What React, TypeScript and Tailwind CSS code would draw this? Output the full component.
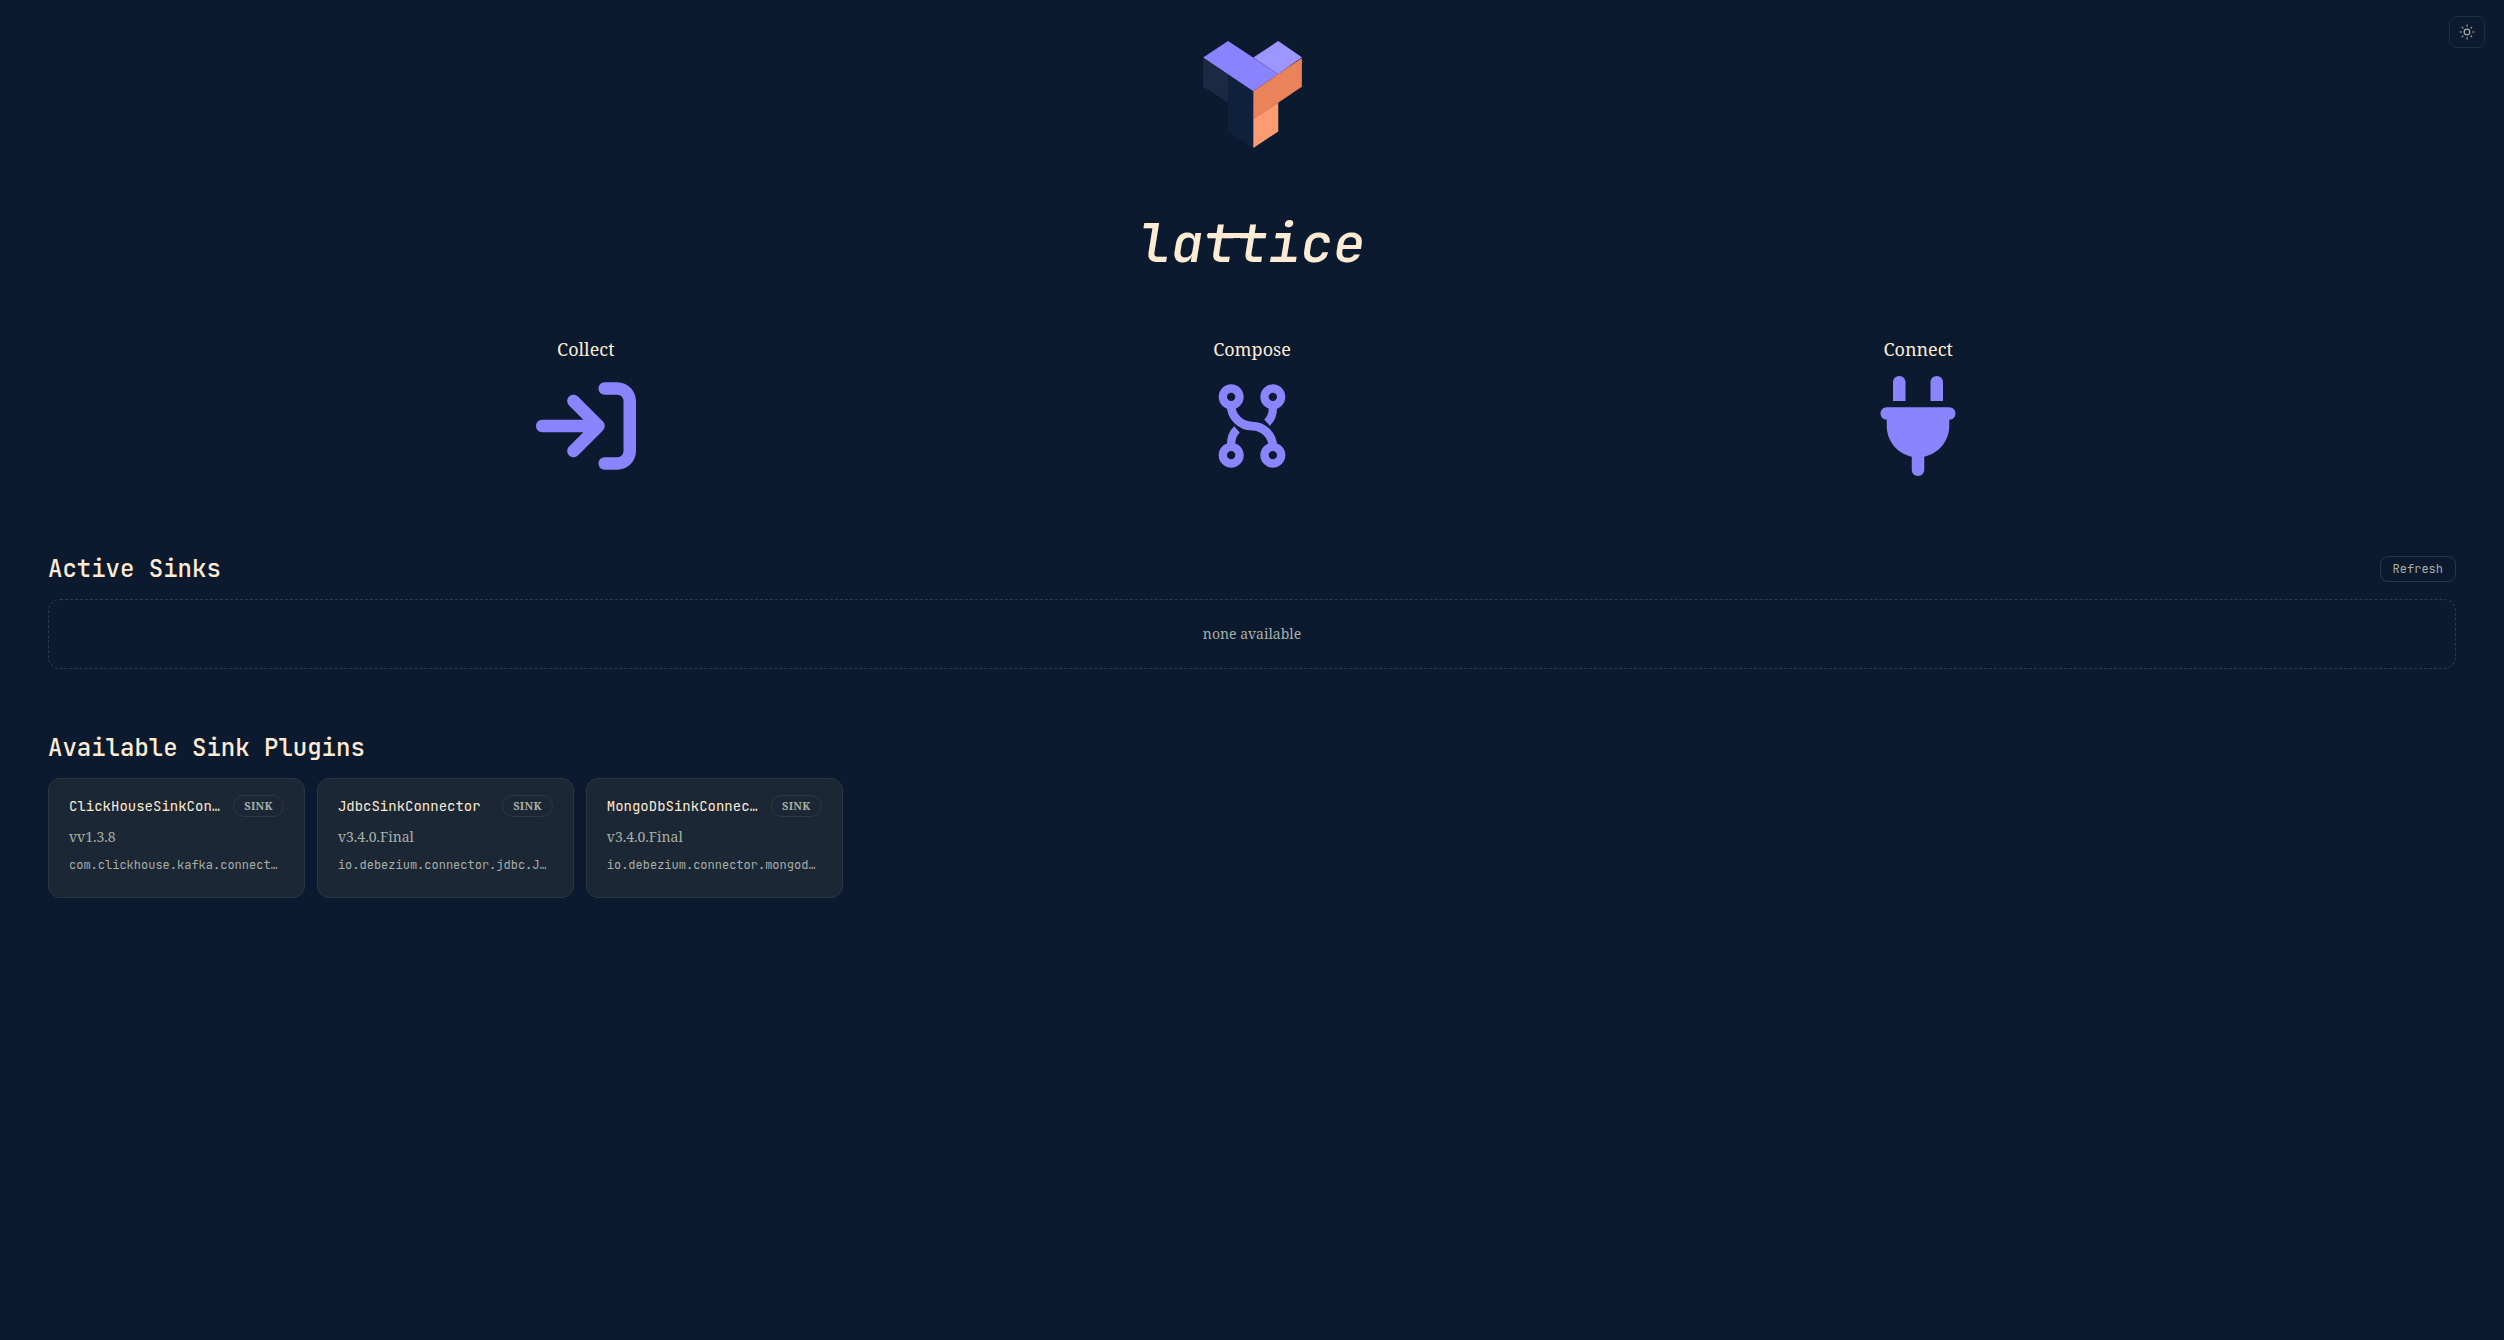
import type { ReactNode } from "react";
import { FaArrowRightToBracket, FaPlug } from "react-icons/fa6";

type Plugin = {
    name: string;
    version: string;
    className: string;
};

const plugins: Plugin[] = [
    {
        name: "ClickHouseSinkConnector",
        version: "v1.3.8",
        className: "com.clickhouse.kafka.connect.ClickHouseSinkConnector",
    },
    {
        name: "JdbcSinkConnector",
        version: "3.4.0.Final",
        className: "io.debezium.connector.jdbc.JdbcSinkConnector",
    },
    {
        name: "MongoDbSinkConnector",
        version: "3.4.0.Final",
        className: "io.debezium.connector.mongodb.MongoDbSinkConnector",
    },
];

function Logo() {
    return (
        <svg viewBox="249 62 297 322" className="w-[99px] h-[107px]" aria-hidden="true">
            <path d="M249 113L324 163V247L249 200Z" fill="#1b2a43" />
            <path d="M324 163L400 213V384L324 334Z" fill="#0f213b" />
            <path d="M400 112L475 62L546 111L475 162Z" fill="#9d96ff" />
            <path d="M249 112L324 62L475 162L400 213Z" fill="#8983ff" />
            <path d="M400 297L475 247V334L400 384Z" fill="#ff9b71" />
            <path d="M400 213L546 113V200L400 298Z" fill="#ea8359" />
        </svg>
    );
}

function ComposeIcon() {
    return (
        <svg
            viewBox="0 0 24 24"
            fill="none"
            stroke="currentColor"
            strokeWidth="2"
            className="size-[100px]"
            aria-hidden="true"
        >
            <circle cx="7" cy="5" r="2" />
            <circle cx="17" cy="5" r="2" />
            <circle cx="7" cy="19" r="2" />
            <circle cx="17" cy="19" r="2" />
            <path d="M7 7a5 5 0 0 0 5 5a5 5 0 0 1 5 5" strokeWidth="2.1" />
            <path d="M17 7.2C17.1 8.8 16.7 10.2 15.6 11.2" />
            <path d="M7 16.8C6.9 15.2 7.3 13.8 8.4 12.8" />
        </svg>
    );
}

function SunIcon() {
    return (
        <svg
            viewBox="0 0 16 16"
            fill="none"
            stroke="currentColor"
            className="size-4"
            aria-hidden="true"
        >
            <circle cx="8" cy="8" r="2.8" strokeWidth="1.2" />
            <path
                d="M8 .5V2.8M8 13.2V15.5M.5 8H2.8M13.2 8H15.5M2.9 2.9L4.3 4.3M11.7 11.7L13.1 13.1M2.9 13.1L4.3 11.7M11.7 4.3L13.1 2.9"
                strokeWidth="1.1"
            />
        </svg>
    );
}

function Step({ title, children }: { title: string; children: ReactNode }) {
    return (
        <div className="flex flex-col items-center gap-[13px]">
            <h3 className="text-lg leading-7 text-[#fdebd3]">{title}</h3>
            <div className="text-[#8a85ff]">{children}</div>
        </div>
    );
}

function PluginCard({ plugin }: { plugin: Plugin }) {
    return (
        <li className="min-w-0 rounded-xl border border-[#293742] bg-[#1b2735] px-5 pt-4 pb-[22px]">
            <div className="flex items-center justify-between gap-3">
                <h3 className="truncate font-[JetBrains_Mono,DejaVu_Sans_Mono,monospace] text-sm leading-5 text-[#fdebd3]">
                    {plugin.name}
                </h3>
                <span className="shrink-0 rounded-full border border-[#2a3945] px-2.5 text-[11px] leading-5 font-bold tracking-wide">
                    SINK
                </span>
            </div>
            <p className="mt-2 text-sm leading-6">v{plugin.version}</p>
            <p className="mt-1.5 truncate font-[JetBrains_Mono,DejaVu_Sans_Mono,monospace] text-xs leading-5">
                {plugin.className}
            </p>
        </li>
    );
}

export default function App() {
    return (
        <div className="min-h-screen bg-[#0b1a2f] font-[Noto_Serif,Droid_Serif,Liberation_Serif,serif] text-[#a8afa5]">
            <button
                type="button"
                aria-label="Toggle theme"
                className="absolute top-4 right-[19px] flex h-8 w-9 items-center justify-center rounded-lg border border-[#1f2d3d]"
            >
                <SunIcon />
            </button>
            <main className="px-12 pt-[41px] pb-12">
                <header className="flex flex-col items-center">
                    <Logo />
                    <h1 className="mt-[59px] font-[JetBrains_Mono,DejaVu_Sans_Mono,monospace] text-[54px] leading-[72px] font-medium italic text-[#fdebd3]">
                        la
                        <span className="relative before:absolute before:inset-x-1 before:top-[26px] before:h-[5px] before:rounded-full before:bg-[#fdebd3]">
                            tt
                        </span>
                        ice
                    </h1>
                </header>
                <section className="mx-auto mt-14 grid w-[83%] grid-cols-3">
                    <Step title="Collect">
                        <FaArrowRightToBracket className="size-[100px]" />
                    </Step>
                    <Step title="Compose">
                        <ComposeIcon />
                    </Step>
                    <Step title="Connect">
                        <FaPlug className="size-[100px]" />
                    </Step>
                </section>
                <section className="mt-[77px]">
                    <div className="flex items-center justify-between">
                        <h2 className="font-[JetBrains_Mono,DejaVu_Sans_Mono,monospace] text-2xl font-medium text-[#fdebd3]">
                            Active Sinks
                        </h2>
                        <button
                            type="button"
                            className="rounded-lg border border-[#2a3845] px-3 py-1 font-[JetBrains_Mono,DejaVu_Sans_Mono,monospace] text-xs"
                        >
                            Refresh
                        </button>
                    </div>
                    <div className="mt-3.5 rounded-xl border border-dashed border-[#2e3c48] p-6 text-center text-sm">
                        none available
                    </div>
                </section>
                <section className="mt-[63px]">
                    <h2 className="font-[JetBrains_Mono,DejaVu_Sans_Mono,monospace] text-2xl font-medium text-[#fdebd3]">
                        Available Sink Plugins
                    </h2>
                    <ul className="mt-3.5 grid grid-cols-[repeat(auto-fill,minmax(240px,1fr))] gap-3">
                        {plugins.map((plugin) => (
                            <PluginCard key={plugin.name} plugin={plugin} />
                        ))}
                    </ul>
                </section>
            </main>
        </div>
    );
}
